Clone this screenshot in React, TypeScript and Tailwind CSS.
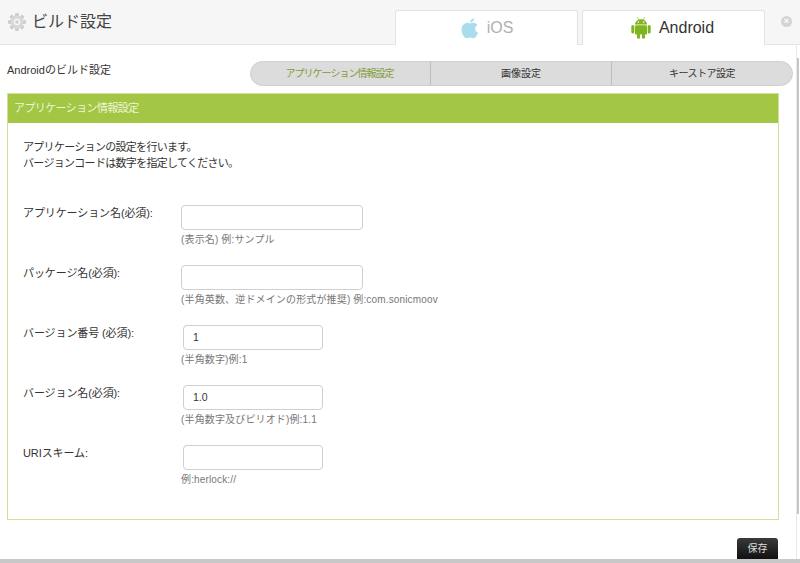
import React from "react";

const font = { fontFamily: '"Liberation Sans", "Noto Sans CJK JP", sans-serif' };

function Gear() {
  const teeth = [0, 45, 90, 135, 180, 225, 270, 315];
  return (
    <svg width="20" height="20" viewBox="0 0 20 20" className="shrink-0">
      {teeth.map((a) => (
        <rect key={a} x="8" y="1" width="4" height="4.5" rx="1" fill="#cfcfcf" transform={`rotate(${a} 10 10)`} />
      ))}
      <circle cx="10" cy="10" r="6.4" fill="#d8d8d8" />
      <circle cx="10" cy="10" r="3.2" fill="#f6f6f6" />
      <circle cx="10" cy="10" r="1.8" fill="#cfcfcf" />
    </svg>
  );
}

function Apple() {
  return (
    <svg width="18" height="21" viewBox="0 0 18 21" className="shrink-0">
      <path
        fill="#a9dcec"
        d="M9 5.6C10.2 5 11.7 4.5 13.2 4.9c1.5.3 2.6 1.1 3.3 2.2-1.6 1-2.4 2.3-2.3 4 .1 1.7 1.1 3 2.8 3.7-.5 1.5-1.3 2.9-2.3 4.2-.8 1-1.7 1.6-2.8 1.3-1.1-.3-1.9-.7-2.9-.7s-1.8.4-2.9.7c-1.1.3-2-.4-2.9-1.5C1.4 16.600.3 13.700.5 10.800c.2-3 2.200-5.500 4.900-5.900 1.300-.2 2.500.3 3.600.7z"
      />
      <path fill="#a9dcec" d="M9 4.400C9 2.300 10.800.4 13 .2c.2 2.300-1.700 4.300-4 4.200z" />
    </svg>
  );
}

function Droid() {
  return (
    <svg width="20" height="22" viewBox="0 0 20 22" className="shrink-0">
      <g fill="#7fb51f">
        <path d="M4 7.500C4.200 4.300 6.800 2.200 10 2.200s5.800 2.100 6 5.300z" />
        <rect x="4" y="8.300" width="12" height="9.200" rx="1" />
        <rect x="0.300" y="8" width="3" height="8.500" rx="1.500" />
        <rect x="16.700" y="8" width="3" height="8.500" rx="1.500" />
        <rect x="6" y="16" width="3" height="5.800" rx="1.500" />
        <rect x="11" y="16" width="3" height="5.800" rx="1.500" />
        <path d="M6.200 0.400l1.800 2.800M13.800 0.400l-1.800 2.800" stroke="#7fb51f" strokeWidth="0.700" />
      </g>
      <circle cx="7.300" cy="5" r="0.800" fill="#fff" />
      <circle cx="12.700" cy="5" r="0.800" fill="#fff" />
    </svg>
  );
}

function Field({
  label,
  value,
  hint,
  narrow,
}: {
  label: string;
  value?: string;
  hint: React.ReactNode;
  narrow?: boolean;
}) {
  return (
    <div className="flex h-[60px]">
      <div className="w-[158px] shrink-0 pt-[1px] text-[11px] leading-[14px] tracking-[-0.1px] text-[#333]">{label}</div>
      <div className="flex flex-col">
        <div
          className={`flex h-[25px] items-center rounded-[4px] border border-[#cfcfcf] bg-white text-[10.5px] text-[#333] ${
            narrow ? "ml-[2px] w-[140px] pl-[9px]" : "w-[182px]"
          }`}
        >
          {value}
        </div>
        <div className="mt-[3px] whitespace-nowrap text-[10px] leading-[14px] tracking-[0.15px] text-[#777]">{hint}</div>
      </div>
    </div>
  );
}

export default function App() {
  return (
    <div style={font} className="flex h-[563px] w-[800px] flex-col overflow-hidden bg-white text-[#333]">
      <header className="flex h-[45px] shrink-0 items-end border-b border-[#e4e4e4] bg-[#f6f6f6]">
        <div className="flex h-full w-[395px] items-center gap-[5px] pl-[7px]">
          <Gear />
          <span className="text-[16px] text-[#444]">ビルド設定</span>
        </div>
        <div className="mb-[-1px] flex h-[35px] w-[183px] items-center justify-center gap-[8px] rounded-t-[3px] border border-b-0 border-[#e2e2e2] bg-white pl-[1px]">
          <Apple />
          <span className="text-[16px] text-[#b0b0b0]">iOS</span>
        </div>
        <div className="mb-[-1px] ml-[4px] flex h-[35px] w-[183px] items-center justify-center gap-[8px] rounded-t-[3px] border border-b-0 border-[#e2e2e2] bg-white pr-[2px]">
          <Droid />
          <span className="text-[16px] text-[#333]">Android</span>
        </div>
        <div className="flex h-full flex-1 items-start justify-end pt-[16px] pr-[8px]">
          <div className="flex h-[11px] w-[11px] items-center justify-center rounded-full bg-[#d4d4d4] text-[9px] leading-none font-bold text-white">
            ×
          </div>
        </div>
      </header>

      <div className="flex min-h-0 flex-1 border-b-[4px] border-[#c8c8c8]">
        <main className="flex w-[796px] shrink-0 flex-col pl-[7px]">
          <div className="mt-[16px] flex h-[25px] items-center">
            <div className="w-[243px] shrink-0 pb-[6px] text-[11px] text-[#333]">Androidのビルド設定</div>
            <div className="flex h-[25px] w-[543px] items-center rounded-full border border-[#cfcfcf] bg-[#dcdcdc] text-[10px]">
              <div className="flex h-full w-[180px] items-center justify-center border-r border-[#bdbdbd] pr-[2px] tracking-[-1px] text-[#7f9b3a]">
                アプリケーション情報設定
              </div>
              <div className="flex h-full w-[181px] items-center justify-center border-r border-[#bdbdbd] text-[#333]">
                画像設定
              </div>
              <div className="flex h-full flex-1 items-center justify-center tracking-[-0.5px] text-[#333]">キーストア設定</div>
            </div>
          </div>

          <section className="mt-[7px] flex h-[427px] w-[772px] flex-col border border-[#cfe09a]">
            <div className="flex h-[29px] shrink-0 items-center bg-[#a3c644] pl-[6px] text-[11px] tracking-[-0.6px] text-[#eef5d8]">
              アプリケーション情報設定
            </div>
            <div className="flex-1 pt-[16px] pl-[15px]">
              <p className="text-[11px] leading-[16px] tracking-[-0.7px] text-[#333]">
                アプリケーションの設定を行います。
                <br />
                バージョンコードは数字を指定してください。
              </p>
              <div className="mt-[34px] flex flex-col">
                <Field label="アプリケーション名(必須):" hint="(表示名) 例:サンプル" />
                <Field label="パッケージ名(必須):" hint="(半角英数、逆ドメインの形式が推奨) 例:com.sonicmoov" />
                <Field label="バージョン番号 (必須):" value="1" hint="(半角数字)例:1" narrow />
                <Field label="バージョン名(必須):" value="1.0" hint="(半角数字及びピリオド)例:1.1" narrow />
                <Field label="URIスキーム:" hint="例:herlock://" narrow />
              </div>
            </div>
          </section>

          <div className="flex w-[771px] flex-1 items-end justify-end">
            <button className="flex h-[21px] w-[41px] items-center justify-center rounded-t-[3px] bg-gradient-to-b from-[#3a3a3a] to-[#111] text-[10px] text-[#ddd]">
              保存
            </button>
          </div>
        </main>
        <div className="flex-1 border-l border-[#e8e8e8] pt-[13px]">
          <div className="h-[456px] w-[2px] bg-[#c6c6c6]" />
        </div>
      </div>
    </div>
  );
}
